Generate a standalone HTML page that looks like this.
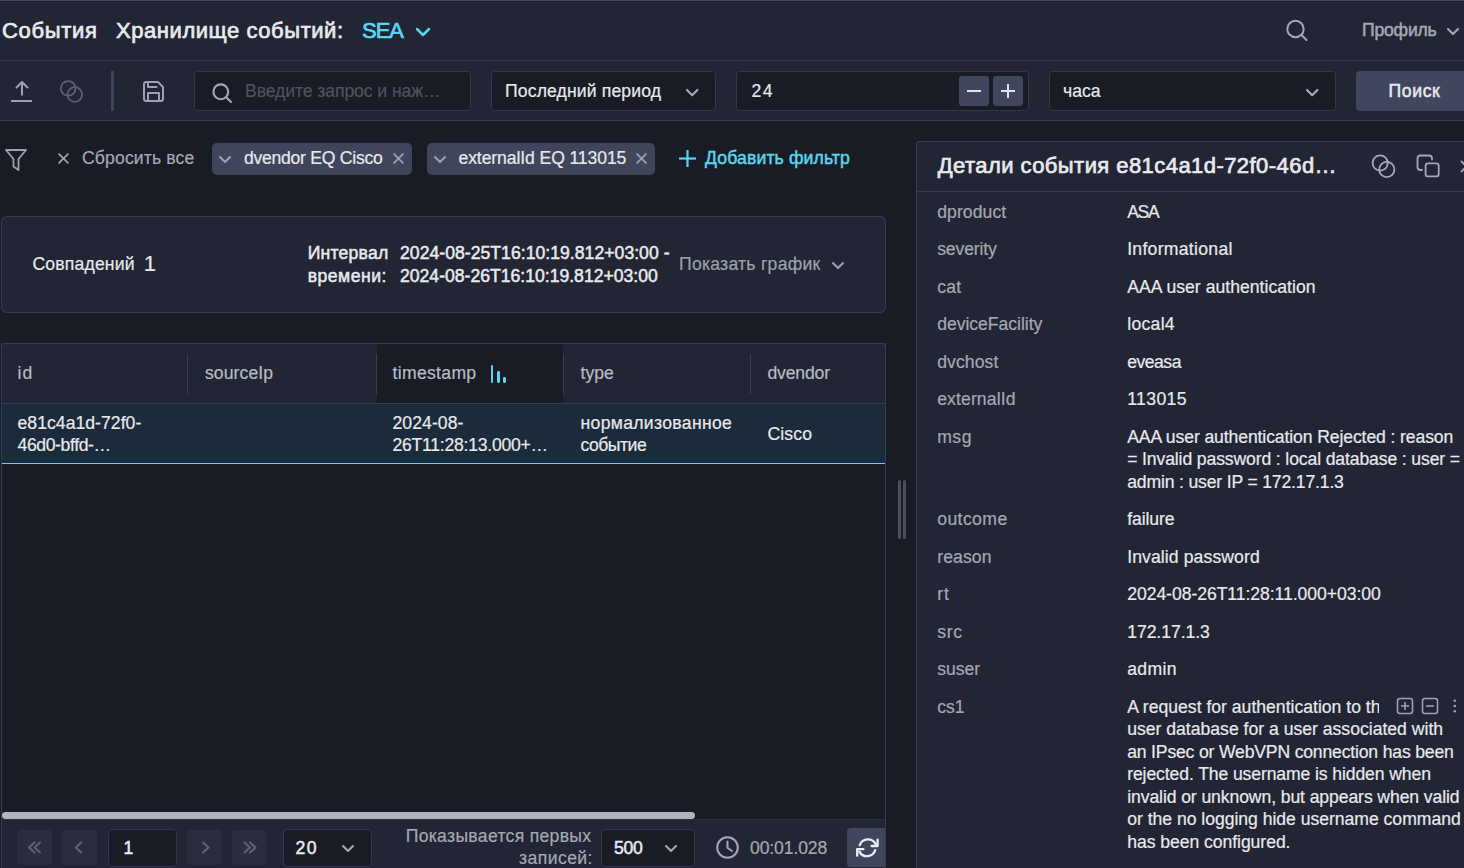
<!DOCTYPE html><html><head><meta charset="utf-8"><style>
html,body{margin:0;padding:0;width:1464px;height:868px;overflow:hidden;background:#191b25;}
.b{position:absolute;box-sizing:border-box;}
.t{position:absolute;white-space:nowrap;font-family:"Liberation Sans",sans-serif;}
</style></head><body>
<div class="b" style="left:0px;top:0px;width:1464px;height:868px;background:#191b25;"></div>
<div class="b" style="left:0px;top:0px;width:1464px;height:61px;background:#222533;"></div>
<div class="b" style="left:0px;top:0px;width:1464px;height:1px;background:#4b4c57;"></div>
<div class="b" style="left:0px;top:1px;width:1464px;height:1px;background:#20212c;"></div>
<div class="b" style="left:0px;top:60px;width:1464px;height:1px;background:#373c52;"></div>
<div class="b" style="left:0px;top:61px;width:1464px;height:59px;background:#222533;"></div>
<div class="b" style="left:0px;top:120px;width:1464px;height:1px;background:#373c52;"></div>
<span class="t" id="t_events" style="left:2.00px;top:17.13px;font-size:22px;line-height:27.5px;font-weight:400;color:#e8e9ed;letter-spacing:0.666px;-webkit-text-stroke:0.7px currentColor;">События</span>
<span class="t" id="t_store" style="left:116.00px;top:17.13px;font-size:22px;line-height:27.5px;font-weight:400;color:#e8e9ed;letter-spacing:0.559px;-webkit-text-stroke:0.7px currentColor;">Хранилище событий:</span>
<span class="t" id="t_sea" style="left:362.00px;top:17.13px;font-size:22px;line-height:27.5px;font-weight:400;color:#58d6ef;letter-spacing:-1.000px;-webkit-text-stroke:0.7px currentColor;">SEA</span>
<svg class="b" style="left:413.7px;top:26.4px;" width="18" height="12" viewBox="0 0 18 12" fill="none"><polyline points="3,3 9,9 15,3" stroke="#58d6ef" stroke-width="2.5" stroke-linecap="round" stroke-linejoin="round"/></svg>
<svg class="b" style="left:1284px;top:18px;" width="26" height="26" viewBox="0 0 26 26" fill="none"><circle cx="11.5" cy="11" r="8.2" stroke="#a5a8b5" stroke-width="2"/><line x1="17.5" y1="17" x2="22.5" y2="22" stroke="#a5a8b5" stroke-width="2" stroke-linecap="round"/></svg>
<span class="t" id="t_profile" style="left:1362.00px;top:18.70px;font-size:17.6px;line-height:22.0px;font-weight:400;color:#a5a8b5;letter-spacing:-0.202px;-webkit-text-stroke:0.5px currentColor;">Профиль</span>
<svg class="b" style="left:1445px;top:26.3px;" width="16" height="11" viewBox="0 0 16 11" fill="none"><polyline points="3,3 8,8 13,3" stroke="#a5a8b5" stroke-width="2.1" stroke-linecap="round" stroke-linejoin="round"/></svg>
<svg class="b" style="left:8px;top:78px;" width="28" height="28" viewBox="0 0 28 28" fill="none"><polyline points="8.5,9.5 14,4 19.5,9.5" stroke="#9ea1ae" stroke-width="2" stroke-linecap="round" stroke-linejoin="round"/><line x1="14" y1="4.5" x2="14" y2="16.8" stroke="#9ea1ae" stroke-width="2" stroke-linecap="round"/><line x1="3.8" y1="22.9" x2="23.2" y2="22.9" stroke="#9ea1ae" stroke-width="2" stroke-linecap="round"/></svg>
<svg class="b" style="left:56px;top:76px;" width="30" height="30" viewBox="0 0 30 30" fill="none"><circle cx="12.2" cy="12.4" r="7.3" stroke="#5e6170" stroke-width="1.8"/><circle cx="18.8" cy="18.5" r="7.3" stroke="#5e6170" stroke-width="1.8"/></svg>
<div class="b" style="left:111px;top:71px;width:2.5px;height:39.5px;background:#3d4460;"></div>
<svg class="b" style="left:140px;top:78px;" width="28" height="28" viewBox="0 0 28 28" fill="none"><path d="M6.2,4 H18 L23,9 V20.8 Q23,23 20.8,23 H6.2 Q4,23 4,20.8 V6.2 Q4,4 6.2,4 Z" stroke="#9ea1ae" stroke-width="2" stroke-linejoin="round"/><polyline points="8,4.5 8,9 16.5,9" stroke="#9ea1ae" stroke-width="2" stroke-linejoin="round" stroke-linecap="round"/><polyline points="8,22.5 8,15 19,15 19,22.5" stroke="#9ea1ae" stroke-width="2" stroke-linejoin="round"/></svg>
<div class="b" style="left:194px;top:71px;width:277px;height:40px;background:#191b25;box-shadow: inset 0 0 0 1px #32364a;border-radius:4px;"></div>
<svg class="b" style="left:208px;top:80px;" width="28" height="28" viewBox="0 0 28 28" fill="none"><circle cx="12.8" cy="11.8" r="7.4" stroke="#a5a8b5" stroke-width="2.1"/><line x1="18.3" y1="17.3" x2="23" y2="22" stroke="#a5a8b5" stroke-width="2.1" stroke-linecap="round"/></svg>
<span class="t" id="t_ph" style="left:245.00px;top:80.40px;font-size:17.6px;line-height:22.0px;font-weight:400;color:#50535f;letter-spacing:-0.079px;-webkit-text-stroke:0.2px currentColor;">Введите запрос и наж…</span>
<div class="b" style="left:491px;top:71px;width:225px;height:40px;background:#191b25;box-shadow: inset 0 0 0 1px #32364a;border-radius:4px;"></div>
<span class="t" id="t_period" style="left:505.00px;top:80.40px;font-size:17.6px;line-height:22.0px;font-weight:400;color:#e8e9ed;letter-spacing:0.133px;-webkit-text-stroke:0.2px currentColor;">Последний период</span>
<svg class="b" style="left:684.0px;top:86.9px;" width="16.4" height="11.2" viewBox="0 0 16.4 11.2" fill="none"><polyline points="3,3 8.2,8.2 13.4,3" stroke="#a5a8b5" stroke-width="2.2" stroke-linecap="round" stroke-linejoin="round"/></svg>
<div class="b" style="left:736px;top:71px;width:293px;height:40px;background:#191b25;box-shadow: inset 0 0 0 1px #32364a;border-radius:4px;"></div>
<span class="t" id="t_24" style="left:751.50px;top:80.40px;font-size:17.6px;line-height:22.0px;font-weight:400;color:#e8e9ed;letter-spacing:1.500px;-webkit-text-stroke:0.2px currentColor;">24</span>
<div class="b" style="left:959px;top:76px;width:30px;height:30px;background:#40465e;border-radius:3px;"></div>
<div class="b" style="left:993px;top:76px;width:30px;height:30px;background:#40465e;border-radius:3px;"></div>
<svg class="b" style="left:959px;top:76px;" width="30" height="30" viewBox="0 0 30 30" fill="none"><line x1="8" y1="15" x2="22" y2="15" stroke="#e2e3e8" stroke-width="2"/></svg>
<svg class="b" style="left:993px;top:76px;" width="30" height="30" viewBox="0 0 30 30" fill="none"><line x1="8" y1="15" x2="22" y2="15" stroke="#e2e3e8" stroke-width="2"/><line x1="15" y1="8" x2="15" y2="22" stroke="#e2e3e8" stroke-width="2"/></svg>
<div class="b" style="left:1049px;top:71px;width:287px;height:40px;background:#191b25;box-shadow: inset 0 0 0 1px #32364a;border-radius:4px;"></div>
<span class="t" id="t_units" style="left:1063.00px;top:80.40px;font-size:17.6px;line-height:22.0px;font-weight:400;color:#e8e9ed;letter-spacing:0.000px;-webkit-text-stroke:0.2px currentColor;">часа</span>
<svg class="b" style="left:1303.8px;top:86.9px;" width="16.4" height="11.2" viewBox="0 0 16.4 11.2" fill="none"><polyline points="3,3 8.2,8.2 13.4,3" stroke="#a5a8b5" stroke-width="2.2" stroke-linecap="round" stroke-linejoin="round"/></svg>
<div class="b" style="left:1356px;top:71px;width:120px;height:40px;background:#40465e;border-radius:4px;"></div>
<span class="t" id="t_search" style="left:1388.50px;top:80.40px;font-size:17.6px;line-height:22.0px;font-weight:400;color:#e8e9ed;letter-spacing:0.625px;-webkit-text-stroke:0.5px currentColor;">Поиск</span>
<svg class="b" style="left:3px;top:147px;" width="26" height="26" viewBox="0 0 26 26" fill="none"><path d="M3,3 H23 L15.5,12 V23 L10.5,19.5 V12 Z" stroke="#9ea1ae" stroke-width="1.8" stroke-linejoin="round"/></svg>
<svg class="b" style="left:56px;top:151px;" width="15" height="15" viewBox="0 0 15 15" fill="none"><line x1="2.6" y1="2.6" x2="12.4" y2="12.4" stroke="#9ea1ae" stroke-width="1.8"/><line x1="12.4" y1="2.6" x2="2.6" y2="12.4" stroke="#9ea1ae" stroke-width="1.8"/></svg>
<span class="t" id="t_reset" style="left:82.00px;top:146.90px;font-size:17.6px;line-height:22.0px;font-weight:400;color:#a5a8b5;letter-spacing:0.136px;-webkit-text-stroke:0.2px currentColor;">Сбросить все</span>
<div class="b" style="left:212px;top:143px;width:200px;height:32px;background:#40455b;border-radius:5px;"></div>
<svg class="b" style="left:217.3px;top:154.1px;" width="16" height="11" viewBox="0 0 16 11" fill="none"><polyline points="3,3 8,8 13,3" stroke="#9ea1ae" stroke-width="2.1" stroke-linecap="round" stroke-linejoin="round"/></svg>
<span class="t" id="t_chip1" style="left:244.00px;top:146.70px;font-size:17.6px;line-height:22.0px;font-weight:400;color:#e8e9ed;letter-spacing:-0.267px;-webkit-text-stroke:0.2px currentColor;">dvendor EQ Cisco</span>
<svg class="b" style="left:391px;top:151px;" width="15" height="15" viewBox="0 0 15 15" fill="none"><line x1="2.6" y1="2.6" x2="12.4" y2="12.4" stroke="#9ea1ae" stroke-width="1.8"/><line x1="12.4" y1="2.6" x2="2.6" y2="12.4" stroke="#9ea1ae" stroke-width="1.8"/></svg>
<div class="b" style="left:427px;top:143px;width:228px;height:32px;background:#40455b;border-radius:5px;"></div>
<svg class="b" style="left:432.3px;top:154.1px;" width="16" height="11" viewBox="0 0 16 11" fill="none"><polyline points="3,3 8,8 13,3" stroke="#9ea1ae" stroke-width="2.1" stroke-linecap="round" stroke-linejoin="round"/></svg>
<span class="t" id="t_chip2" style="left:458.50px;top:146.70px;font-size:17.6px;line-height:22.0px;font-weight:400;color:#e8e9ed;letter-spacing:-0.105px;-webkit-text-stroke:0.2px currentColor;">externalId EQ 113015</span>
<svg class="b" style="left:634px;top:151px;" width="15" height="15" viewBox="0 0 15 15" fill="none"><line x1="2.6" y1="2.6" x2="12.4" y2="12.4" stroke="#9ea1ae" stroke-width="1.8"/><line x1="12.4" y1="2.6" x2="2.6" y2="12.4" stroke="#9ea1ae" stroke-width="1.8"/></svg>
<svg class="b" style="left:677px;top:148px;" width="21" height="21" viewBox="0 0 21 21" fill="none"><line x1="2" y1="10.5" x2="19" y2="10.5" stroke="#58d6ef" stroke-width="2.2"/><line x1="10.5" y1="2" x2="10.5" y2="19" stroke="#58d6ef" stroke-width="2.2"/></svg>
<span class="t" id="t_addf" style="left:705.00px;top:147.40px;font-size:17.6px;line-height:22.0px;font-weight:400;color:#58d6ef;letter-spacing:0.144px;-webkit-text-stroke:0.5px currentColor;">Добавить фильтр</span>
<div class="b" style="left:1px;top:216px;width:885px;height:97px;background:#222533;box-shadow: inset 0 0 0 1px #373c52;border-radius:6px;"></div>
<span class="t" id="t_match" style="left:32.50px;top:253.10px;font-size:17.6px;line-height:22.0px;font-weight:400;color:#e8e9ed;letter-spacing:0.167px;-webkit-text-stroke:0.2px currentColor;">Совпадений</span>
<span class="t" id="t_one" style="left:143.80px;top:250.23px;font-size:22px;line-height:27.5px;font-weight:400;color:#e8e9ed;letter-spacing:0.000px;-webkit-text-stroke:0.2px currentColor;">1</span>
<span class="t" id="t_int1" style="left:307.70px;top:242.10px;font-size:17.6px;line-height:22.0px;font-weight:400;color:#e8e9ed;letter-spacing:0.214px;-webkit-text-stroke:0.5px currentColor;">Интервал</span>
<span class="t" id="t_int2" style="left:307.70px;top:264.60px;font-size:17.6px;line-height:22.0px;font-weight:400;color:#e8e9ed;letter-spacing:0.500px;-webkit-text-stroke:0.5px currentColor;">времени:</span>
<span class="t" id="t_d1" style="left:400.00px;top:242.10px;font-size:17.6px;line-height:22.0px;font-weight:400;color:#e8e9ed;letter-spacing:0.034px;-webkit-text-stroke:0.5px currentColor;">2024-08-25T16:10:19.812+03:00 -</span>
<span class="t" id="t_d2" style="left:400.00px;top:264.60px;font-size:17.6px;line-height:22.0px;font-weight:400;color:#e8e9ed;letter-spacing:0.000px;-webkit-text-stroke:0.5px currentColor;">2024-08-26T16:10:19.812+03:00</span>
<span class="t" id="t_graph" style="left:679.00px;top:253.40px;font-size:17.6px;line-height:22.0px;font-weight:400;color:#9ea1ae;letter-spacing:0.250px;-webkit-text-stroke:0.2px currentColor;">Показать график</span>
<svg class="b" style="left:829.5px;top:259.7px;" width="16" height="11" viewBox="0 0 16 11" fill="none"><polyline points="3,3 8,8 13,3" stroke="#9ea1ae" stroke-width="2.1" stroke-linecap="round" stroke-linejoin="round"/></svg>
<div class="b" style="left:1px;top:343px;width:885px;height:525px;background:#191b25;box-shadow: inset 0 0 0 1px #373c52;border-radius:4px;"></div>
<div class="b" style="left:1px;top:343px;width:885px;height:61px;background:#222533;border-radius:4px 4px 0 0;box-shadow: inset 0 0 0 1px #373c52;"></div>
<div class="b" style="left:377px;top:344px;width:186px;height:59px;background:#191b25;"></div>
<div class="b" style="left:1px;top:402.5px;width:885px;height:1px;background:#373c52;"></div>
<div class="b" style="left:187px;top:354px;width:1px;height:40px;background:#393d50;"></div>
<div class="b" style="left:375.5px;top:354px;width:1px;height:40px;background:#393d50;"></div>
<div class="b" style="left:562.5px;top:354px;width:1px;height:40px;background:#393d50;"></div>
<div class="b" style="left:750px;top:354px;width:1px;height:40px;background:#393d50;"></div>
<span class="t" id="h_id" style="left:17.50px;top:361.90px;font-size:17.6px;line-height:22.0px;font-weight:400;color:#b9bcc7;letter-spacing:1.000px;-webkit-text-stroke:0.2px currentColor;">id</span>
<span class="t" id="h_src" style="left:205.00px;top:361.90px;font-size:17.6px;line-height:22.0px;font-weight:400;color:#b9bcc7;letter-spacing:0.071px;-webkit-text-stroke:0.2px currentColor;">sourceIp</span>
<span class="t" id="h_ts" style="left:392.50px;top:361.90px;font-size:17.6px;line-height:22.0px;font-weight:400;color:#b9bcc7;letter-spacing:0.314px;-webkit-text-stroke:0.2px currentColor;">timestamp</span>
<span class="t" id="h_type" style="left:580.50px;top:361.90px;font-size:17.6px;line-height:22.0px;font-weight:400;color:#b9bcc7;letter-spacing:0.000px;-webkit-text-stroke:0.2px currentColor;">type</span>
<span class="t" id="h_dv" style="left:767.50px;top:361.90px;font-size:17.6px;line-height:22.0px;font-weight:400;color:#b9bcc7;letter-spacing:-0.167px;-webkit-text-stroke:0.2px currentColor;">dvendor</span>
<div class="b" style="left:491.2px;top:364.5px;width:2.3px;height:18.5px;background:#58d6ef;border-radius:1.15px;"></div>
<div class="b" style="left:497.4px;top:370.5px;width:2.3px;height:12.5px;background:#58d6ef;border-radius:1.15px;"></div>
<div class="b" style="left:503.3px;top:376.5px;width:2.3px;height:6.5px;background:#58d6ef;border-radius:1.15px;"></div>
<div class="b" style="left:2px;top:403.5px;width:883px;height:60px;background:#1b2b3b;"></div>
<div class="b" style="left:2px;top:462.5px;width:883px;height:1.6px;background:#58d6ef;"></div>
<span class="t" id="r_id1" style="left:17.50px;top:412.20px;font-size:17.6px;line-height:22.0px;font-weight:400;color:#e8e9ed;letter-spacing:0.038px;-webkit-text-stroke:0.2px currentColor;">e81c4a1d-72f0-</span>
<span class="t" id="r_id2" style="left:17.50px;top:433.70px;font-size:17.6px;line-height:22.0px;font-weight:400;color:#e8e9ed;letter-spacing:-0.383px;-webkit-text-stroke:0.2px currentColor;">46d0-bffd-…</span>
<span class="t" id="r_ts1" style="left:392.50px;top:412.20px;font-size:17.6px;line-height:22.0px;font-weight:400;color:#e8e9ed;letter-spacing:0.071px;-webkit-text-stroke:0.2px currentColor;">2024-08-</span>
<span class="t" id="r_ts2" style="left:392.50px;top:433.70px;font-size:17.6px;line-height:22.0px;font-weight:400;color:#e8e9ed;letter-spacing:-0.244px;-webkit-text-stroke:0.2px currentColor;">26T11:28:13.000+…</span>
<span class="t" id="r_ty1" style="left:580.50px;top:412.20px;font-size:17.6px;line-height:22.0px;font-weight:400;color:#e8e9ed;letter-spacing:0.321px;-webkit-text-stroke:0.2px currentColor;">нормализованное</span>
<span class="t" id="r_ty2" style="left:580.50px;top:433.70px;font-size:17.6px;line-height:22.0px;font-weight:400;color:#e8e9ed;letter-spacing:-0.500px;-webkit-text-stroke:0.2px currentColor;">событие</span>
<span class="t" id="r_dv" style="left:767.50px;top:422.90px;font-size:17.6px;line-height:22.0px;font-weight:400;color:#e8e9ed;letter-spacing:0.125px;-webkit-text-stroke:0.2px currentColor;">Cisco</span>
<div class="b" style="left:2px;top:812px;width:693px;height:7px;background:#b1b3be;border-radius:3.5px;"></div>
<div class="b" style="left:2px;top:819px;width:883px;height:49px;background:#222533;"></div>
<div class="b" style="left:2px;top:819px;width:883px;height:1px;background:#2b2e3c;"></div>
<div class="b" style="left:17px;top:830px;width:35px;height:35px;background:#2a2d3c;border-radius:4px;"></div>
<div class="b" style="left:62px;top:830px;width:35px;height:35px;background:#2a2d3c;border-radius:4px;"></div>
<div class="b" style="left:187px;top:830px;width:35px;height:35px;background:#2a2d3c;border-radius:4px;"></div>
<div class="b" style="left:232px;top:830px;width:35px;height:35px;background:#2a2d3c;border-radius:4px;"></div>
<svg class="b" style="left:17px;top:830px;" width="35" height="35" viewBox="0 0 35 35" fill="none"><polyline points="17.5,12.4 12,17.5 17.5,22.6" stroke="#60636f" stroke-width="2" stroke-linecap="round" stroke-linejoin="round" fill="none"/><polyline points="23,12.4 17.5,17.5 23,22.6" stroke="#60636f" stroke-width="2" stroke-linecap="round" stroke-linejoin="round" fill="none"/></svg>
<svg class="b" style="left:62px;top:830px;" width="35" height="35" viewBox="0 0 35 35" fill="none"><polyline points="19.2,12.4 13.7,17.5 19.2,22.6" stroke="#60636f" stroke-width="2" stroke-linecap="round" stroke-linejoin="round" fill="none"/></svg>
<svg class="b" style="left:187px;top:830px;" width="35" height="35" viewBox="0 0 35 35" fill="none"><polyline points="16,12.4 21.5,17.5 16,22.6" stroke="#60636f" stroke-width="2" stroke-linecap="round" stroke-linejoin="round" fill="none"/></svg>
<svg class="b" style="left:232px;top:830px;" width="35" height="35" viewBox="0 0 35 35" fill="none"><polyline points="12.5,12.4 18,17.5 12.5,22.6" stroke="#60636f" stroke-width="2" stroke-linecap="round" stroke-linejoin="round" fill="none"/><polyline points="18,12.4 23.5,17.5 18,22.6" stroke="#60636f" stroke-width="2" stroke-linecap="round" stroke-linejoin="round" fill="none"/></svg>
<div class="b" style="left:108px;top:828.5px;width:68.5px;height:38px;background:#191b25;box-shadow: inset 0 0 0 1px #32364a;border-radius:4px;"></div>
<span class="t" id="f_1" style="left:123.50px;top:836.90px;font-size:17.6px;line-height:22.0px;font-weight:400;color:#e8e9ed;letter-spacing:0.000px;-webkit-text-stroke:0.5px currentColor;">1</span>
<div class="b" style="left:282.5px;top:828.5px;width:89px;height:38px;background:#191b25;box-shadow: inset 0 0 0 1px #32364a;border-radius:4px;"></div>
<span class="t" id="f_20" style="left:295.50px;top:836.90px;font-size:17.6px;line-height:22.0px;font-weight:400;color:#e8e9ed;letter-spacing:1.500px;-webkit-text-stroke:0.5px currentColor;">20</span>
<svg class="b" style="left:340.2px;top:843.2px;" width="16" height="11" viewBox="0 0 16 11" fill="none"><polyline points="3,3 8,8 13,3" stroke="#a5a8b5" stroke-width="2.1" stroke-linecap="round" stroke-linejoin="round"/></svg>
<span class="t" id="f_show1" style="left:405.70px;top:824.60px;font-size:17.6px;line-height:22.0px;font-weight:400;color:#a5a8b5;letter-spacing:0.306px;-webkit-text-stroke:0.2px currentColor;">Показывается первых</span>
<span class="t" id="f_show2" style="left:519.00px;top:847.10px;font-size:17.6px;line-height:22.0px;font-weight:400;color:#a5a8b5;letter-spacing:0.429px;-webkit-text-stroke:0.2px currentColor;">записей:</span>
<div class="b" style="left:600.5px;top:828.5px;width:94px;height:38px;background:#191b25;box-shadow: inset 0 0 0 1px #32364a;border-radius:4px;"></div>
<span class="t" id="f_500" style="left:614.00px;top:836.90px;font-size:17.6px;line-height:22.0px;font-weight:400;color:#e8e9ed;letter-spacing:-0.300px;-webkit-text-stroke:0.5px currentColor;">500</span>
<svg class="b" style="left:663.4px;top:843.2px;" width="16" height="11" viewBox="0 0 16 11" fill="none"><polyline points="3,3 8,8 13,3" stroke="#a5a8b5" stroke-width="2.1" stroke-linecap="round" stroke-linejoin="round"/></svg>
<svg class="b" style="left:714px;top:834px;" width="27" height="27" viewBox="0 0 27 27" fill="none"><circle cx="13.5" cy="13.5" r="10.3" stroke="#a5a8b5" stroke-width="2"/><polyline points="13.5,7.5 13.5,13.8 18,17" stroke="#a5a8b5" stroke-width="2" stroke-linecap="round" stroke-linejoin="round"/></svg>
<span class="t" id="f_time" style="left:750.00px;top:836.90px;font-size:17.6px;line-height:22.0px;font-weight:400;color:#a5a8b5;letter-spacing:-0.125px;-webkit-text-stroke:0.2px currentColor;">00:01.028</span>
<div class="b" style="left:847px;top:828px;width:39px;height:38.5px;background:#40465e;border-radius:4px;border-radius:4px 0 0 4px;"></div>
<svg class="b" style="left:849px;top:834px;" width="36" height="30" viewBox="0 0 36 30" fill="none"><path d="M10.8,11.2 A8.6,8.6 0 0 1 26.8,10.6" stroke="#eceef2" stroke-width="2.3" stroke-linecap="round" fill="none"/><polyline points="28.6,5.6 28.6,12 22.6,12" stroke="#eceef2" stroke-width="2.3" stroke-linecap="round" stroke-linejoin="round" fill="none"/><path d="M26.2,16.2 A8.6,8.6 0 0 1 10.4,17.6" stroke="#eceef2" stroke-width="2.3" stroke-linecap="round" fill="none"/><polyline points="8.2,21.8 8.2,15.2 14.4,15.2" stroke="#eceef2" stroke-width="2.3" stroke-linecap="round" stroke-linejoin="round" fill="none"/></svg>
<div class="b" style="left:885px;top:343px;width:1px;height:525px;background:#373c52;"></div>
<div class="b" style="left:1px;top:343px;width:1px;height:525px;background:#373c52;"></div>
<div class="b" style="left:898px;top:479.5px;width:3px;height:59.5px;background:#4b4e5c;border-radius:1.5px;"></div>
<div class="b" style="left:903px;top:479.5px;width:3px;height:59.5px;background:#4b4e5c;border-radius:1.5px;"></div>
<div class="b" style="left:916px;top:141px;width:600px;height:760px;background:#222533;box-shadow: inset 0 0 0 1px #373c52;border-radius:4px;"></div>
<div class="b" style="left:917px;top:191px;width:547px;height:1px;background:#373c52;"></div>
<span class="t" id="p_title" style="left:937.70px;top:152.23px;font-size:22px;line-height:27.5px;font-weight:400;color:#e8e9ed;letter-spacing:0.439px;-webkit-text-stroke:0.7px currentColor;">Детали события e81c4a1d-72f0-46d…</span>
<svg class="b" style="left:1368px;top:151px;" width="32" height="32" viewBox="0 0 32 32" fill="none"><circle cx="12.2" cy="12" r="7.6" stroke="#a5a8b5" stroke-width="1.8"/><circle cx="18.8" cy="18.5" r="7.6" stroke="#a5a8b5" stroke-width="1.8"/></svg>
<svg class="b" style="left:1414px;top:152px;" width="30" height="30" viewBox="0 0 30 30" fill="none"><path d="M8,18 H6.5 Q3.5,18 3.5,15 V6.5 Q3.5,3.5 6.5,3.5 H15 Q18,3.5 18,6.5 V7.5" stroke="#a5a8b5" stroke-width="1.8" fill="none" stroke-linecap="round"/><rect x="11.6" y="11.3" width="13.1" height="13.1" rx="2.5" stroke="#a5a8b5" stroke-width="1.8"/></svg>
<svg class="b" style="left:1458px;top:158px;" width="12" height="18" viewBox="0 0 12 18" fill="none"><line x1="3" y1="3" x2="14" y2="14" stroke="#a5a8b5" stroke-width="1.8"/><line x1="14" y1="3" x2="3" y2="14" stroke="#a5a8b5" stroke-width="1.8"/></svg>
<span class="t" id="d_l0" style="left:937.20px;top:200.90px;font-size:17.6px;line-height:22.0px;font-weight:400;color:#a5a8b5;letter-spacing:0.072px;-webkit-text-stroke:0.2px currentColor;">dproduct</span>
<span class="t" id="d_v0_0" style="left:1127.20px;top:200.90px;font-size:17.6px;line-height:22.0px;font-weight:400;color:#e8e9ed;letter-spacing:-1.300px;-webkit-text-stroke:0.2px currentColor;">ASA</span>
<span class="t" id="d_l1" style="left:937.20px;top:238.40px;font-size:17.6px;line-height:22.0px;font-weight:400;color:#a5a8b5;letter-spacing:-0.143px;-webkit-text-stroke:0.2px currentColor;">severity</span>
<span class="t" id="d_v1_0" style="left:1127.20px;top:238.40px;font-size:17.6px;line-height:22.0px;font-weight:400;color:#e8e9ed;letter-spacing:0.291px;-webkit-text-stroke:0.2px currentColor;">Informational</span>
<span class="t" id="d_l2" style="left:937.20px;top:275.90px;font-size:17.6px;line-height:22.0px;font-weight:400;color:#a5a8b5;letter-spacing:0.250px;-webkit-text-stroke:0.2px currentColor;">cat</span>
<span class="t" id="d_v2_0" style="left:1127.20px;top:275.90px;font-size:17.6px;line-height:22.0px;font-weight:400;color:#e8e9ed;letter-spacing:0.023px;-webkit-text-stroke:0.2px currentColor;">AAA user authentication</span>
<span class="t" id="d_l3" style="left:937.20px;top:313.40px;font-size:17.6px;line-height:22.0px;font-weight:400;color:#a5a8b5;letter-spacing:-0.038px;-webkit-text-stroke:0.2px currentColor;">deviceFacility</span>
<span class="t" id="d_v3_0" style="left:1127.20px;top:313.40px;font-size:17.6px;line-height:22.0px;font-weight:400;color:#e8e9ed;letter-spacing:0.300px;-webkit-text-stroke:0.2px currentColor;">local4</span>
<span class="t" id="d_l4" style="left:937.20px;top:350.90px;font-size:17.6px;line-height:22.0px;font-weight:400;color:#a5a8b5;letter-spacing:0.083px;-webkit-text-stroke:0.2px currentColor;">dvchost</span>
<span class="t" id="d_v4_0" style="left:1127.20px;top:350.90px;font-size:17.6px;line-height:22.0px;font-weight:400;color:#e8e9ed;letter-spacing:-0.500px;-webkit-text-stroke:0.2px currentColor;">eveasa</span>
<span class="t" id="d_l5" style="left:937.20px;top:388.40px;font-size:17.6px;line-height:22.0px;font-weight:400;color:#a5a8b5;letter-spacing:0.111px;-webkit-text-stroke:0.2px currentColor;">externalId</span>
<span class="t" id="d_v5_0" style="left:1127.20px;top:388.40px;font-size:17.6px;line-height:22.0px;font-weight:400;color:#e8e9ed;letter-spacing:0.400px;-webkit-text-stroke:0.2px currentColor;">113015</span>
<span class="t" id="d_l6" style="left:937.20px;top:425.90px;font-size:17.6px;line-height:22.0px;font-weight:400;color:#a5a8b5;letter-spacing:0.500px;-webkit-text-stroke:0.2px currentColor;">msg</span>
<span class="t" id="d_v6_0" style="left:1127.20px;top:425.90px;font-size:17.6px;line-height:22.0px;font-weight:400;color:#e8e9ed;letter-spacing:-0.112px;-webkit-text-stroke:0.2px currentColor;">AAA user authentication Rejected : reason</span>
<span class="t" id="d_v6_1" style="left:1127.20px;top:448.40px;font-size:17.6px;line-height:22.0px;font-weight:400;color:#e8e9ed;letter-spacing:-0.128px;-webkit-text-stroke:0.2px currentColor;">= Invalid password : local database : user =</span>
<span class="t" id="d_v6_2" style="left:1127.20px;top:470.90px;font-size:17.6px;line-height:22.0px;font-weight:400;color:#e8e9ed;letter-spacing:-0.167px;-webkit-text-stroke:0.2px currentColor;">admin : user IP = 172.17.1.3</span>
<span class="t" id="d_l7" style="left:937.20px;top:508.40px;font-size:17.6px;line-height:22.0px;font-weight:400;color:#a5a8b5;letter-spacing:0.417px;-webkit-text-stroke:0.2px currentColor;">outcome</span>
<span class="t" id="d_v7_0" style="left:1127.20px;top:508.40px;font-size:17.6px;line-height:22.0px;font-weight:400;color:#e8e9ed;letter-spacing:-0.083px;-webkit-text-stroke:0.2px currentColor;">failure</span>
<span class="t" id="d_l8" style="left:937.20px;top:545.90px;font-size:17.6px;line-height:22.0px;font-weight:400;color:#a5a8b5;letter-spacing:0.100px;-webkit-text-stroke:0.2px currentColor;">reason</span>
<span class="t" id="d_v8_0" style="left:1127.20px;top:545.90px;font-size:17.6px;line-height:22.0px;font-weight:400;color:#e8e9ed;letter-spacing:0.100px;-webkit-text-stroke:0.2px currentColor;">Invalid password</span>
<span class="t" id="d_l9" style="left:937.20px;top:583.40px;font-size:17.6px;line-height:22.0px;font-weight:400;color:#a5a8b5;letter-spacing:1.000px;-webkit-text-stroke:0.2px currentColor;">rt</span>
<span class="t" id="d_v9_0" style="left:1127.20px;top:583.40px;font-size:17.6px;line-height:22.0px;font-weight:400;color:#e8e9ed;letter-spacing:-0.054px;-webkit-text-stroke:0.2px currentColor;">2024-08-26T11:28:11.000+03:00</span>
<span class="t" id="d_l10" style="left:937.20px;top:620.90px;font-size:17.6px;line-height:22.0px;font-weight:400;color:#a5a8b5;letter-spacing:0.750px;-webkit-text-stroke:0.2px currentColor;">src</span>
<span class="t" id="d_v10_0" style="left:1127.20px;top:620.90px;font-size:17.6px;line-height:22.0px;font-weight:400;color:#e8e9ed;letter-spacing:-0.056px;-webkit-text-stroke:0.2px currentColor;">172.17.1.3</span>
<span class="t" id="d_l11" style="left:937.20px;top:658.40px;font-size:17.6px;line-height:22.0px;font-weight:400;color:#a5a8b5;letter-spacing:0.000px;-webkit-text-stroke:0.2px currentColor;">suser</span>
<span class="t" id="d_v11_0" style="left:1127.20px;top:658.40px;font-size:17.6px;line-height:22.0px;font-weight:400;color:#e8e9ed;letter-spacing:0.375px;-webkit-text-stroke:0.2px currentColor;">admin</span>
<span class="t" id="d_l12" style="left:937.20px;top:695.90px;font-size:17.6px;line-height:22.0px;font-weight:400;color:#a5a8b5;letter-spacing:0.000px;-webkit-text-stroke:0.2px currentColor;">cs1</span>
<span class="t" id="d_v12_0" style="left:1127.20px;top:695.90px;font-size:17.6px;line-height:22.0px;font-weight:400;color:#e8e9ed;letter-spacing:0.000px;-webkit-text-stroke:0.2px currentColor;">A request for authentication to the local</span>
<span class="t" id="d_v12_1" style="left:1127.20px;top:718.40px;font-size:17.6px;line-height:22.0px;font-weight:400;color:#e8e9ed;letter-spacing:0.000px;-webkit-text-stroke:0.2px currentColor;">user database for a user associated with</span>
<span class="t" id="d_v12_2" style="left:1127.20px;top:740.90px;font-size:17.6px;line-height:22.0px;font-weight:400;color:#e8e9ed;letter-spacing:-0.176px;-webkit-text-stroke:0.2px currentColor;">an IPsec or WebVPN connection has been</span>
<span class="t" id="d_v12_3" style="left:1127.20px;top:763.40px;font-size:17.6px;line-height:22.0px;font-weight:400;color:#e8e9ed;letter-spacing:-0.111px;-webkit-text-stroke:0.2px currentColor;">rejected. The username is hidden when</span>
<span class="t" id="d_v12_4" style="left:1127.20px;top:785.90px;font-size:17.6px;line-height:22.0px;font-weight:400;color:#e8e9ed;letter-spacing:-0.098px;-webkit-text-stroke:0.2px currentColor;">invalid or unknown, but appears when valid</span>
<span class="t" id="d_v12_5" style="left:1127.20px;top:808.40px;font-size:17.6px;line-height:22.0px;font-weight:400;color:#e8e9ed;letter-spacing:-0.026px;-webkit-text-stroke:0.2px currentColor;">or the no logging hide username command</span>
<span class="t" id="d_v12_6" style="left:1127.20px;top:830.90px;font-size:17.6px;line-height:22.0px;font-weight:400;color:#e8e9ed;letter-spacing:-0.053px;-webkit-text-stroke:0.2px currentColor;">has been configured.</span>
<div class="b" style="left:1379px;top:695.0px;width:90px;height:24px;background:#222533;"></div>
<svg class="b" style="left:1395px;top:696px;" width="20" height="20" viewBox="0 0 20 20" fill="none"><rect x="2.5" y="2.5" width="15" height="15" rx="2.5" stroke="#9ea1ae" stroke-width="1.6"/><line x1="6" y1="10" x2="14" y2="10" stroke="#9ea1ae" stroke-width="1.6"/><line x1="10" y1="6" x2="10" y2="14" stroke="#9ea1ae" stroke-width="1.6"/></svg>
<svg class="b" style="left:1420px;top:696px;" width="20" height="20" viewBox="0 0 20 20" fill="none"><rect x="2.5" y="2.5" width="15" height="15" rx="2.5" stroke="#9ea1ae" stroke-width="1.6"/><line x1="6" y1="10" x2="14" y2="10" stroke="#9ea1ae" stroke-width="1.6"/></svg>
<svg class="b" style="left:1450px;top:696px;" width="10" height="20" viewBox="0 0 10 20" fill="none"><circle cx="4.8" cy="4.7" r="1.3" fill="#9ea1ae"/><circle cx="4.8" cy="10" r="1.3" fill="#9ea1ae"/><circle cx="4.8" cy="15.3" r="1.3" fill="#9ea1ae"/></svg>
</body></html>
